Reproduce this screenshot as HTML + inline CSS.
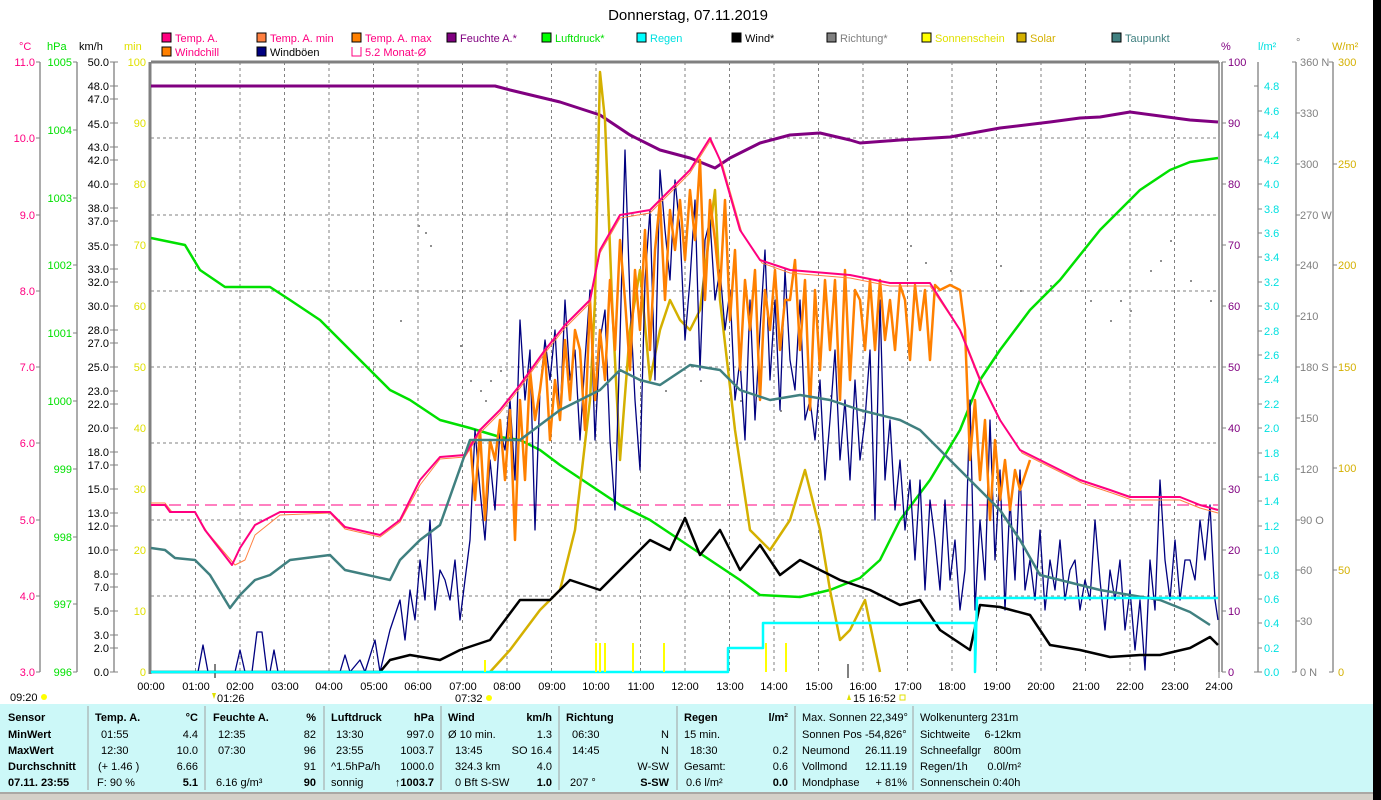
<!DOCTYPE html>
<html><head><meta charset="utf-8"><style>
html,body{margin:0;padding:0;background:#fff;width:1381px;height:800px;overflow:hidden}
svg{display:block;font-family:"Liberation Sans",sans-serif}
</style></head><body>
<svg width="1381" height="800" viewBox="0 0 1381 800" xmlns="http://www.w3.org/2000/svg">
<rect x="1373" y="0" width="8" height="800" fill="#000"/>
<text x="688" y="20" font-size="15" text-anchor="middle" fill="#000">Donnerstag, 07.11.2019</text>
<g font-size="11">
<rect x="162" y="33" width="9" height="9" fill="#ff0080" stroke="#000"/><text x="175" y="42" fill="#ff0080">Temp. A.</text>
<rect x="162" y="47" width="9" height="9" fill="#ff8000" stroke="#000"/><text x="175" y="56" fill="#ff0080">Windchill</text>
<rect x="257" y="33" width="9" height="9" fill="#ff8040" stroke="#000"/><text x="270" y="42" fill="#ff0080">Temp. A. min</text>
<rect x="257" y="47" width="9" height="9" fill="#000080" stroke="#000"/><text x="270" y="56" fill="#000">Windböen</text>
<rect x="352" y="33" width="9" height="9" fill="#ff8000" stroke="#000"/><text x="365" y="42" fill="#ff0080">Temp. A. max</text>
<path d="M352 47v9h9v-9" fill="none" stroke="#ff0080"/><text x="365" y="56" fill="#ff0080">5.2 Monat-Ø</text>
<rect x="447" y="33" width="9" height="9" fill="#800080" stroke="#000"/><text x="460" y="42" fill="#800080">Feuchte A.*</text>
<rect x="542" y="33" width="9" height="9" fill="#00ff00" stroke="#000"/><text x="555" y="42" fill="#00e000">Luftdruck*</text>
<rect x="637" y="33" width="9" height="9" fill="#00ffff" stroke="#000"/><text x="650" y="42" fill="#00e0e0">Regen</text>
<rect x="732" y="33" width="9" height="9" fill="#000" stroke="#000"/><text x="745" y="42" fill="#000">Wind*</text>
<rect x="827" y="33" width="9" height="9" fill="#808080" stroke="#000"/><text x="840" y="42" fill="#808080">Richtung*</text>
<rect x="922" y="33" width="9" height="9" fill="#ffff00" stroke="#000"/><text x="935" y="42" fill="#e0e000">Sonnenschein</text>
<rect x="1017" y="33" width="9" height="9" fill="#d4b000" stroke="#000"/><text x="1030" y="42" fill="#d4b000">Solar</text>
<rect x="1112" y="33" width="9" height="9" fill="#408080" stroke="#000"/><text x="1125" y="42" fill="#408080">Taupunkt</text>
</g>
<g font-size="11">
<text x="19" y="50" fill="#ff0080">°C</text><text x="47" y="50" fill="#00e000">hPa</text><text x="79" y="50" fill="#000">km/h</text><text x="124" y="50" fill="#e0e000">min</text>
<text x="1221" y="50" fill="#800080">%</text><text x="1258" y="50" fill="#00e0e0">l/m²</text><text x="1296" y="46" fill="#808080">°</text><text x="1332" y="50" fill="#d4b000">W/m²</text>
</g>
<g stroke="#808080" stroke-width="1.3">
<line x1="40" y1="62" x2="40" y2="672"/><line x1="77" y1="62" x2="77" y2="672"/><line x1="114" y1="62" x2="114" y2="672"/>
<line x1="1258" y1="62" x2="1258" y2="672"/><line x1="1296" y1="62" x2="1296" y2="672"/><line x1="1333" y1="62" x2="1333" y2="672"/>
</g>
<g font-size="11" text-anchor="end">
<g fill="#ff0080" stroke="none">
<text x="35" y="66">11.0</text><text x="35" y="142">10.0</text><text x="35" y="219">9.0</text><text x="35" y="295">8.0</text><text x="35" y="371">7.0</text><text x="35" y="447">6.0</text><text x="35" y="524">5.0</text><text x="35" y="600">4.0</text><text x="35" y="676">3.0</text></g>
<g stroke="#808080"><path d="M36 62h4M36 138h4M36 215h4M36 291h4M36 367h4M36 443h4M36 520h4M36 596h4M36 672h4"/></g>
<g fill="#00e000"><text x="72" y="66">1005</text><text x="72" y="134">1004</text><text x="72" y="202">1003</text><text x="72" y="269">1002</text><text x="72" y="337">1001</text><text x="72" y="405">1000</text><text x="72" y="473">999</text><text x="72" y="541">998</text><text x="72" y="608">997</text><text x="72" y="676">996</text></g>
<g stroke="#808080"><path d="M73 62h4M73 130h4M73 198h4M73 265h4M73 333h4M73 401h4M73 469h4M73 537h4M73 604h4M73 672h4"/></g>
<g fill="#000"><text x="109" y="66">50.0</text><text x="109" y="90">48.0</text><text x="109" y="103">47.0</text><text x="109" y="128">45.0</text><text x="109" y="151">43.0</text><text x="109" y="164">42.0</text><text x="109" y="188">40.0</text><text x="109" y="212">38.0</text><text x="109" y="225">37.0</text><text x="109" y="250">35.0</text><text x="109" y="273">33.0</text><text x="109" y="286">32.0</text><text x="109" y="310">30.0</text><text x="109" y="334">28.0</text><text x="109" y="347">27.0</text><text x="109" y="371">25.0</text><text x="109" y="395">23.0</text><text x="109" y="408">22.0</text><text x="109" y="432">20.0</text><text x="109" y="456">18.0</text><text x="109" y="469">17.0</text><text x="109" y="493">15.0</text><text x="109" y="517">13.0</text><text x="109" y="530">12.0</text><text x="109" y="554">10.0</text><text x="109" y="578">8.0</text><text x="109" y="591">7.0</text><text x="109" y="615">5.0</text><text x="109" y="639">3.0</text><text x="109" y="652">2.0</text><text x="109" y="676">0.0</text></g>
<g stroke="#808080"><path d="M110 62h8M110 86h8M110 99h8M110 123h8M110 147h8M110 160h8M110 184h8M110 208h8M110 221h8M110 245h8M110 269h8M110 282h8M110 306h8M110 330h8M110 343h8M110 367h8M110 391h8M110 404h8M110 428h8M110 452h8M110 465h8M110 489h8M110 513h8M110 526h8M110 550h8M110 574h8M110 587h8M110 611h8M110 635h8M110 648h8M110 672h8"/></g>
<g fill="#e0e000"><text x="146" y="66">100</text><text x="146" y="127">90</text><text x="146" y="188">80</text><text x="146" y="249">70</text><text x="146" y="310">60</text><text x="146" y="371">50</text><text x="146" y="432">40</text><text x="146" y="493">30</text><text x="146" y="554">20</text><text x="146" y="615">10</text><text x="146" y="676">0</text></g>
</g>
<g font-size="11">
<g fill="#800080"><text x="1228" y="66">100</text><text x="1228" y="127">90</text><text x="1228" y="188">80</text><text x="1228" y="249">70</text><text x="1228" y="310">60</text><text x="1228" y="371">50</text><text x="1228" y="432">40</text><text x="1228" y="493">30</text><text x="1228" y="554">20</text><text x="1228" y="615">10</text><text x="1228" y="676">0</text></g>
<g stroke="#808080"><path d="M1222 62h4M1222 123h4M1222 184h4M1222 245h4M1222 306h4M1222 367h4M1222 428h4M1222 489h4M1222 550h4M1222 611h4M1222 672h4"/></g>
<g fill="#00e0e0"><text x="1264" y="90">4.8</text><text x="1264" y="115">4.6</text><text x="1264" y="139">4.4</text><text x="1264" y="164">4.2</text><text x="1264" y="188">4.0</text><text x="1264" y="213">3.8</text><text x="1264" y="237">3.6</text><text x="1264" y="261">3.4</text><text x="1264" y="286">3.2</text><text x="1264" y="310">3.0</text><text x="1264" y="335">2.8</text><text x="1264" y="359">2.6</text><text x="1264" y="383">2.4</text><text x="1264" y="408">2.2</text><text x="1264" y="432">2.0</text><text x="1264" y="457">1.8</text><text x="1264" y="481">1.6</text><text x="1264" y="505">1.4</text><text x="1264" y="530">1.2</text><text x="1264" y="554">1.0</text><text x="1264" y="579">0.8</text><text x="1264" y="603">0.6</text><text x="1264" y="627">0.4</text><text x="1264" y="652">0.2</text><text x="1264" y="676">0.0</text></g>
<g stroke="#808080"><path d="M1254 86h4M1258 111h4M1258 135h4M1258 160h4M1258 184h4M1258 209h4M1258 233h4M1258 257h4M1258 282h4M1258 306h4M1258 331h4M1258 355h4M1258 379h4M1258 404h4M1258 428h4M1258 453h4M1258 477h4M1258 501h4M1258 526h4M1258 550h4M1258 575h4M1258 599h4M1258 623h4M1258 648h4M1254 672h8"/></g>
<g fill="#808080"><text x="1300" y="66">360 N</text><text x="1300" y="117">330</text><text x="1300" y="168">300</text><text x="1300" y="219">270 W</text><text x="1300" y="269">240</text><text x="1300" y="320">210</text><text x="1300" y="371">180 S</text><text x="1300" y="422">150</text><text x="1300" y="473">120</text><text x="1300" y="524">90  O</text><text x="1300" y="574">60</text><text x="1300" y="625">30</text><text x="1300" y="676">0  N</text></g>
<g stroke="#808080"><path d="M1292 62h4M1296 113h4M1296 164h4M1296 215h4M1296 265h4M1296 316h4M1296 367h4M1296 418h4M1296 469h4M1296 520h4M1296 570h4M1296 621h4M1292 672h4M1329 62h4M1333 164h4M1333 265h4M1333 367h4M1333 468h4M1333 570h4M1329 672h4"/></g>
<g fill="#d4b000"><text x="1338" y="66">300</text><text x="1338" y="168">250</text><text x="1338" y="269">200</text><text x="1338" y="371">150</text><text x="1338" y="472">100</text><text x="1338" y="574">50</text><text x="1338" y="676">0</text></g>
</g>
<g stroke="#808080" stroke-dasharray="3,3" stroke-width="1">
<path d="M151 138H1218M151 215H1218M151 291H1218M151 367H1218M151 443H1218M151 520H1218M151 596H1218"/>
<path d="M195.5 62V672M240 62V672M284.5 62V672M329 62V672M373.5 62V672M418 62V672M462.5 62V672M507 62V672M551.5 62V672M596 62V672M640.5 62V672M685 62V672M729.5 62V672M774 62V672M818.5 62V672M863 62V672M907.5 62V672M952 62V672M996.5 62V672M1041 62V672M1085.5 62V672M1130 62V672M1174.5 62V672"/>
</g>
<g stroke="#808080" fill="none">
<path d="M151 62H1219" stroke-width="3"/>
<path d="M150 62V674" stroke-width="3"/>
<path d="M1219 62V672M1222 62V672" stroke-width="1.5"/>
<path d="M1219 672V678" /><path d="M215 664V678" stroke-width="2"/><path d="M848 664V678" stroke-width="2"/>
</g>
<g fill="#909090">
<rect x="418" y="225" width="2" height="2"/><rect x="425" y="232" width="2" height="2"/><rect x="430" y="245" width="2" height="2"/><rect x="460" y="345" width="2" height="2"/><rect x="480" y="390" width="2" height="2"/><rect x="490" y="380" width="2" height="2"/><rect x="500" y="370" width="2" height="2"/><rect x="470" y="380" width="2" height="2"/><rect x="485" y="400" width="2" height="2"/><rect x="640" y="395" width="2" height="2"/><rect x="665" y="390" width="2" height="2"/><rect x="700" y="380" width="2" height="2"/><rect x="740" y="400" width="2" height="2"/><rect x="780" y="410" width="2" height="2"/><rect x="830" y="395" width="2" height="2"/><rect x="910" y="245" width="2" height="2"/><rect x="925" y="262" width="2" height="2"/><rect x="950" y="270" width="2" height="2"/><rect x="1000" y="265" width="2" height="2"/><rect x="1020" y="290" width="2" height="2"/><rect x="1050" y="285" width="2" height="2"/><rect x="1090" y="300" width="2" height="2"/><rect x="1110" y="320" width="2" height="2"/><rect x="1130" y="310" width="2" height="2"/><rect x="1150" y="270" width="2" height="2"/><rect x="1170" y="240" width="2" height="2"/><rect x="1190" y="280" width="2" height="2"/><rect x="1210" y="300" width="2" height="2"/><rect x="1160" y="260" width="2" height="2"/><rect x="1120" y="300" width="2" height="2"/><rect x="400" y="320" width="2" height="2"/>
</g>
<g fill="none" stroke-linejoin="round">
<line x1="151" y1="505" x2="1218" y2="505" stroke="#ff0080" stroke-dasharray="12,6" stroke-width="1"/>
<polyline stroke="#800080" stroke-width="3" points="151,86 495,86 510,90 560,102 600,115 630,135 660,150 690,158 715,168 730,158 760,143 790,135 820,133 850,140 860,143 900,140 950,137 1000,128 1050,122 1080,118 1100,117 1130,112 1160,116 1190,120 1218,122"/>
<polyline stroke="#00e000" stroke-width="2.5" points="151,238 185,245 200,270 225,287 270,287 290,300 320,320 360,360 390,390 410,400 440,420 470,428 500,437 520,440 540,450 560,465 590,485 620,505 650,520 680,540 710,560 740,580 760,595 800,597 830,590 860,578 880,560 900,520 930,480 960,430 980,380 1000,350 1030,310 1060,280 1100,230 1140,190 1170,170 1190,162 1218,158"/>
<polyline stroke="#d4b000" stroke-width="2.5" points="490,672 510,650 540,610 560,590 575,530 590,400 595,300 600,72 605,120 612,300 620,460 630,330 640,270 650,380 660,330 670,300 680,320 690,330 700,310 715,190 720,300 735,430 750,530 770,550 790,520 805,470 820,530 830,590 840,640 850,630 865,600 880,672"/>
<polyline stroke="#000080" stroke-width="1.3" points="151,672 198,672 203,645 208,672 235,672 240,650 245,672 252,672 257,632 262,632 267,672 270,672 274,650 278,672 340,672 345,655 350,672 360,660 365,672 375,640 380,672 390,630 400,600 405,640 410,590 415,620 420,560 425,600 430,520 435,610 440,570 445,580 450,600 455,560 460,620 470,540 475,430 480,490 485,540 490,460 495,510 500,430 505,450 510,400 515,480 520,320 525,400 530,350 535,530 540,390 545,340 550,380 555,330 560,420 565,300 570,380 575,350 580,440 585,360 590,290 595,440 600,340 605,310 610,440 615,510 620,340 625,150 630,300 635,400 640,470 645,280 650,210 655,380 660,170 665,230 670,280 675,180 680,230 685,340 690,280 695,200 700,370 705,240 710,220 715,300 720,270 725,330 730,290 735,400 740,360 745,440 750,300 755,420 760,330 765,250 770,380 775,300 780,410 785,270 790,360 795,390 800,300 805,420 810,400 815,440 820,380 825,480 830,420 835,350 840,460 845,400 850,480 855,380 860,460 865,420 870,350 875,520 880,300 885,480 890,420 895,510 900,460 905,530 910,480 915,560 920,480 925,590 930,500 935,540 940,590 945,500 950,580 955,540 960,610 965,570 970,400 975,610 980,520 985,580 990,420 995,560 1000,470 1005,610 1010,500 1015,580 1020,470 1025,590 1030,560 1035,600 1040,530 1045,610 1050,560 1055,590 1060,540 1065,600 1070,570 1075,560 1080,610 1085,580 1090,600 1095,520 1100,580 1105,630 1110,570 1115,600 1120,560 1125,630 1130,590 1135,650 1140,600 1145,670 1150,560 1155,610 1160,480 1165,560 1170,600 1175,540 1180,600 1185,560 1190,560 1195,580 1200,520 1205,560 1210,505 1215,600 1218,620"/>
<polyline stroke="#ff8000" stroke-width="2.5" points="470,440 475,500 480,430 485,520 490,440 495,460 500,420 505,480 510,410 515,540 520,400 525,480 530,370 535,420 540,390 545,350 550,440 555,380 560,420 565,340 570,400 575,330 580,350 585,430 590,300 595,400 600,330 605,380 610,280 615,350 620,240 625,300 630,370 635,270 640,330 645,230 650,350 655,250 660,200 665,300 670,210 675,250 680,200 685,260 690,190 695,240 700,160 705,300 710,200 715,240 720,290 725,200 730,320 735,250 740,370 745,280 750,330 755,270 760,400 765,290 770,330 775,270 780,350 785,300 790,300 795,260 800,350 805,280 810,410 815,290 820,370 825,280 830,350 835,280 840,400 845,270 850,380 855,290 860,300 865,350 870,280 875,350 880,280 885,340 890,300 895,350 900,285 905,300 910,360 915,285 920,330 925,290 930,360 935,285 940,290 950,285 960,290 965,330 970,460 975,400 980,480 985,420 990,520 995,440 1000,500 1005,460 1010,510 1015,470 1020,490 1030,460"/>
<polyline stroke="#ff8040" stroke-width="1" points="151,503 165,503 172,512 195,512 207,532 218,545 235,565 245,560 255,535 280,515 330,513 345,529 380,537 400,522 420,485 440,459 465,457 480,433 500,413 520,388 545,353 565,328 590,303 600,253 620,218 650,213 670,193 690,173 710,141 722,163 742,233 762,263 790,273 850,278 890,286 930,286 962,333 982,383 1002,423 1022,453 1042,463 1062,473 1082,483 1112,493 1132,500 1180,500 1200,508 1218,513"/>
<polyline stroke="#ff0080" stroke-width="2" points="151,505 165,505 170,512 195,512 205,530 215,543 232,565 240,548 255,525 280,512 330,512 345,527 380,535 400,520 420,480 440,457 465,455 480,430 500,410 520,385 545,350 565,325 590,300 600,250 620,215 650,210 670,190 690,170 710,138 720,160 740,230 760,260 790,270 850,275 890,283 930,283 960,330 980,380 1000,420 1020,450 1040,460 1060,470 1080,480 1110,490 1130,497 1180,497 1200,505 1218,510"/>
<polyline stroke="#408080" stroke-width="2.5" points="151,548 165,550 175,558 195,560 210,575 230,608 240,595 255,580 270,575 290,560 330,555 345,570 390,580 400,560 420,540 440,525 470,440 490,440 520,440 540,425 560,410 600,390 620,370 640,380 660,385 690,365 720,370 740,390 770,400 800,395 830,400 860,410 900,420 920,430 940,450 960,470 980,490 1000,510 1020,540 1040,575 1060,580 1080,585 1100,590 1130,595 1160,600 1190,612 1210,625"/>
<polyline stroke="#000" stroke-width="2.5" points="151,672 380,672 390,660 410,655 440,660 460,650 490,640 520,600 550,600 570,580 600,590 620,570 650,540 670,550 685,518 700,555 720,530 740,570 760,545 780,575 800,560 820,570 840,580 870,590 900,605 920,600 940,630 970,650 980,605 1000,607 1030,615 1050,645 1080,650 1110,657 1140,655 1160,655 1190,648 1210,637 1218,645"/>
<polyline stroke="#00ffff" stroke-width="2.5" points="151,672 728,672 728,648 763,648 763,623 975,623 975,672 977,598 1218,598"/>
<path stroke="#ffff00" stroke-width="2" d="M596 643V672M600 643V672M605 643V672M633 643V672M664 643V672M766 643V672M786 643V672M485 660V672"/>
</g>
<g font-size="11" text-anchor="middle" fill="#000">
<text x="151" y="690">00:00</text><text x="196" y="690">01:00</text><text x="240" y="690">02:00</text><text x="285" y="690">03:00</text><text x="329" y="690">04:00</text><text x="374" y="690">05:00</text><text x="418" y="690">06:00</text><text x="463" y="690">07:00</text><text x="507" y="690">08:00</text><text x="552" y="690">09:00</text><text x="596" y="690">10:00</text><text x="641" y="690">11:00</text><text x="685" y="690">12:00</text><text x="730" y="690">13:00</text><text x="774" y="690">14:00</text><text x="819" y="690">15:00</text><text x="863" y="690">16:00</text><text x="908" y="690">17:00</text><text x="952" y="690">18:00</text><text x="997" y="690">19:00</text><text x="1041" y="690">20:00</text><text x="1086" y="690">21:00</text><text x="1130" y="690">22:00</text><text x="1175" y="690">23:00</text><text x="1219" y="690">24:00</text>
</g>
<g font-size="11" fill="#000">
<text x="10" y="701">09:20</text><circle cx="44" cy="697" r="3" fill="#ffff00"/>
<text x="217" y="702">01:26</text><path d="M212 693l2 6 2-6z" fill="#e0e000"/>
<text x="455" y="702">07:32</text><circle cx="489" cy="698" r="3" fill="#ffff00"/>
<text x="853" y="702">15 16:52</text><path d="M847 700l2-6 2 6z" fill="#e0e000"/><rect x="900" y="695" width="5" height="5" fill="none" stroke="#e0e000"/>
</g>
<rect x="0" y="704" width="1373" height="88" fill="#ccf8f8"/>
<rect x="0" y="792" width="1373" height="8" fill="#d4d0c8"/>
<path d="M0 793H1373" stroke="#808080"/>
<g stroke="#a0a0a0"><path d="M88 706V790M205 706V790M324 706V790M441 706V790M559 706V790M677 706V790M795 706V790M913 706V790"/></g>
<g font-size="11" fill="#000">
<g font-weight="bold"><text x="8" y="721">Sensor</text><text x="8" y="738">MinWert</text><text x="8" y="754">MaxWert</text><text x="8" y="770">Durchschnitt</text><text x="8" y="786">07.11. 23:55</text></g>
<text x="95" y="721" font-weight="bold">Temp. A.</text><text x="198" y="721" font-weight="bold" text-anchor="end">°C</text>
<text x="101" y="738">01:55</text><text x="198" y="738" text-anchor="end">4.4</text>
<text x="101" y="754">12:30</text><text x="198" y="754" text-anchor="end">10.0</text>
<text x="98" y="770">(+ 1.46 )</text><text x="198" y="770" text-anchor="end">6.66</text>
<text x="97" y="786">F: 90 %</text><text x="198" y="786" text-anchor="end" font-weight="bold">5.1</text>
<text x="213" y="721" font-weight="bold">Feuchte A.</text><text x="316" y="721" font-weight="bold" text-anchor="end">%</text>
<text x="218" y="738">12:35</text><text x="316" y="738" text-anchor="end">82</text>
<text x="218" y="754">07:30</text><text x="316" y="754" text-anchor="end">96</text>
<text x="316" y="770" text-anchor="end">91</text>
<text x="216" y="786">6.16 g/m³</text><text x="316" y="786" text-anchor="end" font-weight="bold">90</text>
<text x="331" y="721" font-weight="bold">Luftdruck</text><text x="434" y="721" font-weight="bold" text-anchor="end">hPa</text>
<text x="336" y="738">13:30</text><text x="434" y="738" text-anchor="end">997.0</text>
<text x="336" y="754">23:55</text><text x="434" y="754" text-anchor="end">1003.7</text>
<text x="331" y="770">^1.5hPa/h</text><text x="434" y="770" text-anchor="end">1000.0</text>
<text x="331" y="786">sonnig</text><text x="434" y="786" text-anchor="end" font-weight="bold">↑1003.7</text>
<text x="448" y="721" font-weight="bold">Wind</text><text x="552" y="721" font-weight="bold" text-anchor="end">km/h</text>
<text x="448" y="738">Ø 10 min.</text><text x="552" y="738" text-anchor="end">1.3</text>
<text x="455" y="754">13:45</text><text x="552" y="754" text-anchor="end">SO 16.4</text>
<text x="455" y="770">324.3 km</text><text x="552" y="770" text-anchor="end">4.0</text>
<text x="455" y="786">0 Bft S-SW</text><text x="552" y="786" text-anchor="end" font-weight="bold">1.0</text>
<text x="566" y="721" font-weight="bold">Richtung</text>
<text x="572" y="738">06:30</text><text x="669" y="738" text-anchor="end">N</text>
<text x="572" y="754">14:45</text><text x="669" y="754" text-anchor="end">N</text>
<text x="669" y="770" text-anchor="end">W-SW</text>
<text x="570" y="786">207 °</text><text x="669" y="786" text-anchor="end" font-weight="bold">S-SW</text>
<text x="684" y="721" font-weight="bold">Regen</text><text x="788" y="721" font-weight="bold" text-anchor="end">l/m²</text>
<text x="684" y="738">15 min.</text>
<text x="690" y="754">18:30</text><text x="788" y="754" text-anchor="end">0.2</text>
<text x="684" y="770">Gesamt:</text><text x="788" y="770" text-anchor="end">0.6</text>
<text x="686" y="786">0.6 l/m²</text><text x="788" y="786" text-anchor="end" font-weight="bold">0.0</text>
<text x="802" y="721">Max. Sonnen 22,349°</text>
<text x="802" y="738">Sonnen Pos  -54,826°</text>
<text x="802" y="754">Neumond</text><text x="907" y="754" text-anchor="end">26.11.19</text>
<text x="802" y="770">Vollmond</text><text x="907" y="770" text-anchor="end">12.11.19</text>
<text x="802" y="786">Mondphase</text><text x="907" y="786" text-anchor="end">+ 81%</text>
<text x="920" y="721">Wolkenunterg   231m</text>
<text x="920" y="738">Sichtweite</text><text x="1021" y="738" text-anchor="end">6-12km</text>
<text x="920" y="754">Schneefallgr</text><text x="1021" y="754" text-anchor="end">800m</text>
<text x="920" y="770">Regen/1h</text><text x="1021" y="770" text-anchor="end">0.0l/m²</text>
<text x="920" y="786">Sonnenschein  0:40h</text>
</g>
</svg>
</body></html>
